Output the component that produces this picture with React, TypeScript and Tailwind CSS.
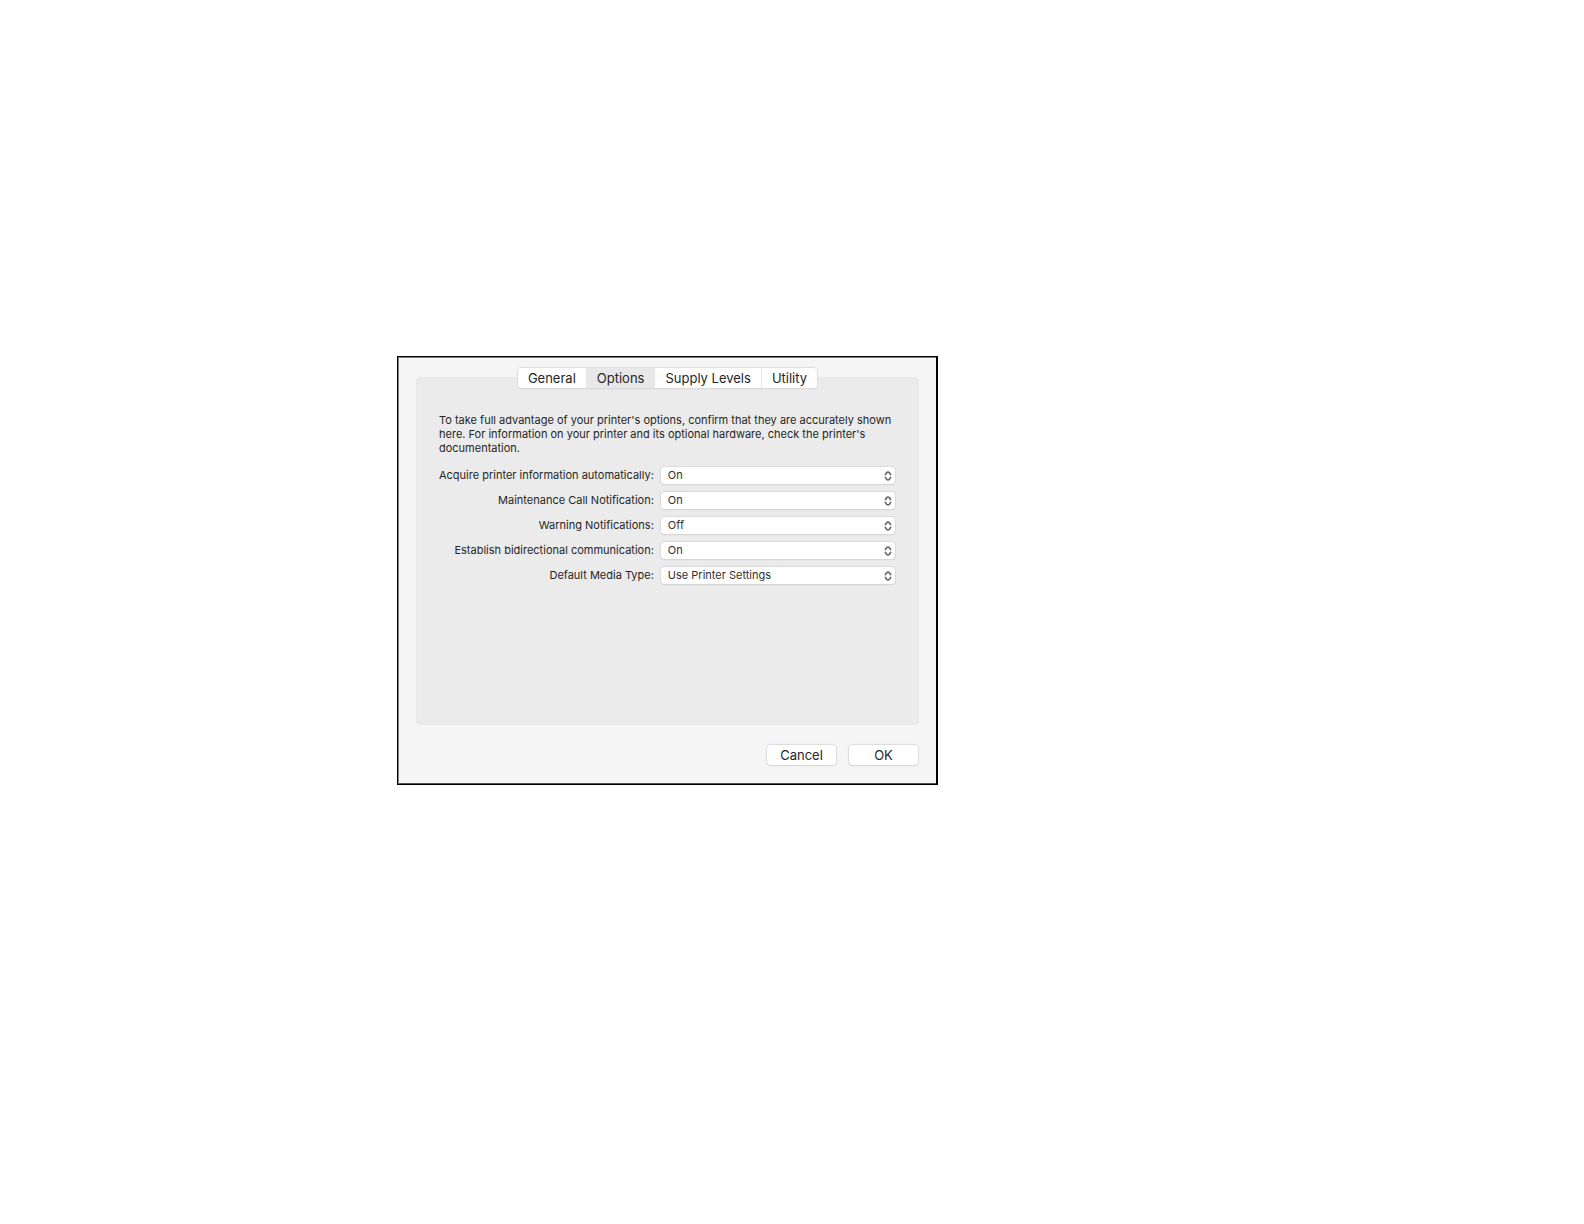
import React, { useState } from 'react';

const TABS = ['General', 'Options', 'Supply Levels', 'Utility'];

const FIELDS = [
  { id: 'acquire', label: 'Acquire printer information automatically:', value: 'On', options: ['On', 'Off'] },
  { id: 'maintenance', label: 'Maintenance Call Notification:', value: 'On', options: ['On', 'Off'] },
  { id: 'warning', label: 'Warning Notifications:', value: 'Off', options: ['On', 'Off'] },
  { id: 'bidirectional', label: 'Establish bidirectional communication:', value: 'On', options: ['On', 'Off'] },
  { id: 'media', label: 'Default Media Type:', value: 'Use Printer Settings', options: ['Use Printer Settings'] },
];

const UpDownIcon: React.FC = () => (
  <svg
    aria-hidden="true"
    viewBox="0 0 8 12"
    className="pointer-events-none absolute top-1/2 right-[3px] h-3 w-2 -translate-y-1/2"
    fill="none"
    stroke="#6a6a6a"
    strokeWidth="1.7"
    strokeLinecap="round"
    strokeLinejoin="round"
  >
    <path d="M1.4 4.6 L2.4 3 Q4 1.2 5.6 3 L6.6 4.6" />
    <path d="M1.4 7.4 L2.4 9 Q4 10.8 5.6 9 L6.6 7.4" />
  </svg>
);

const PushButton: React.FC<{ children: React.ReactNode }> = ({ children }) => (
  <button
    type="button"
    className="h-5 w-[69px] rounded bg-white text-[13px] leading-5 text-[#262626] shadow-[0_0_1px_1px_#dcdcdc,0_1px_1px_#c4c4c4]"
  >
    {children}
  </button>
);

export default function App() {
  const [tab, setTab] = useState('Options');
  const [values, setValues] = useState<Record<string, string>>(
    Object.fromEntries(FIELDS.map((f) => [f.id, f.value]))
  );

  return (
    <main className="min-h-screen bg-white pt-[356px] pr-4 pb-8 pl-[397px] font-['Inter',sans-serif]">
      <section
        aria-label="Printer options"
        className="max-w-[541px] border border-r-2 border-black bg-[#f5f5f5] pt-[11px] pr-[17px] pb-[19px] pl-[18px] shadow-[inset_1px_1px_0_#808080,inset_0_-1px_0_#505050]"
      >
        <div role="tablist" className="relative z-10 flex justify-center">
          <div className="flex h-5 divide-x divide-[#e6e6e6] overflow-hidden rounded bg-white shadow-[0_0_1px_1px_#dcdcdc,0_1px_1px_#c4c4c4]">
            {TABS.map((name) => (
              <button
                key={name}
                type="button"
                role="tab"
                aria-selected={tab === name}
                onClick={() => setTab(name)}
                className={`px-[10px] text-[13px] leading-5 text-[#262626] ${
                  tab === name ? 'bg-[#e8e8e8]' : 'bg-white'
                }`}
              >
                {name}
              </button>
            ))}
          </div>
        </div>

        <div className="-mt-[11px] rounded border border-[#e8e8e8] bg-[#ebebeb] px-[22px] pt-[35px] pb-[140px]">
          <p className="text-[11px] leading-[14px] text-[#262626]">
            To take full advantage of your printer's options, confirm that they are accurately shown here. For
            information on your printer and its optional hardware, check the printer's documentation.
          </p>

          <div className="mt-3 mr-px grid grid-cols-[auto_1fr] items-center gap-x-[7px] gap-y-2">
            {FIELDS.map((field) => (
              <React.Fragment key={field.id}>
                <label
                  htmlFor={field.id}
                  className="text-right text-[11px] leading-[17px] whitespace-nowrap text-[#262626]"
                >
                  {field.label}
                </label>
                <div className="relative h-[17px]">
                  <select
                    id={field.id}
                    value={values[field.id]}
                    onChange={(e) => setValues({ ...values, [field.id]: e.target.value })}
                    className="block h-[17px] w-full appearance-none rounded bg-white pl-[7px] text-[11px] leading-[17px] text-[#303030] shadow-[0_0_1px_1px_#dadada,0_1px_1px_#c0c0c0]"
                  >
                    {field.options.map((option) => (
                      <option key={option}>{option}</option>
                    ))}
                  </select>
                  <UpDownIcon />
                </div>
              </React.Fragment>
            ))}
          </div>
        </div>

        <div className="mt-5 flex justify-end gap-[13px] pr-px">
          <PushButton>Cancel</PushButton>
          <PushButton>OK</PushButton>
        </div>
      </section>
    </main>
  );
}
